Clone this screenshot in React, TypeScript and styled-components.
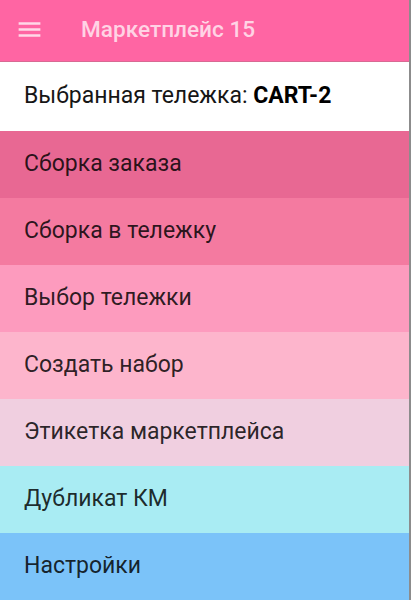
import React from "react";
import styled, { createGlobalStyle } from "styled-components";

const Global = createGlobalStyle`
  html, body { margin: 0; padding: 0; background: #ffffff; }
  body { font-family: Roboto, "Noto Sans", "Liberation Sans", sans-serif; }
`;

const Page = styled.div`
  width: 409px;
  height: 600px;
  overflow: hidden;
  border-right: 2px solid #8c8c8c;
  display: flex;
  flex-direction: column;
`;

const AppBar = styled.header`
  height: 62px;
  flex: 0 0 62px;
  box-sizing: border-box;
  background: #ff65a3;
  border-bottom: 1px solid #d86a93;
  display: flex;
  align-items: center;
  padding-left: 15px;
  padding-bottom: 2px;
  gap: 37px;
`;

const MenuButton = styled.div`
  width: 29px;
  height: 29px;
  display: flex;
  align-items: center;
  justify-content: center;
`;

const Title = styled.h1`
  margin: 0;
  font-size: 22.6px;
  font-weight: 500;
  color: rgba(255, 255, 255, 0.72);
`;

const Selected = styled.div`
  height: 69px;
  flex: 0 0 69px;
  box-sizing: border-box;
  background: #ffffff;
  display: flex;
  align-items: center;
  padding-left: 24px;
  padding-bottom: 2px;
  font-size: 23px;
  color: #161616;
`;

const Strong = styled.b`
  font-weight: 700;
  color: #000;
`;

const Item = styled.div<{ $bg: string }>`
  height: 67px;
  flex: 0 0 67px;
  box-sizing: border-box;
  background: ${(p) => p.$bg};
  display: flex;
  align-items: center;
  padding-left: 24px;
  padding-bottom: 3px;
  font-size: 23px;
  color: rgba(0, 0, 0, 0.84);
`;

const items: { label: string; bg: string }[] = [
  { label: "Сборка заказа", bg: "#e86893" },
  { label: "Сборка в тележку", bg: "#f47aa0" },
  { label: "Выбор тележки", bg: "#fd9bbe" },
  { label: "Создать набор", bg: "#fdb5cc" },
  { label: "Этикетка маркетплейса", bg: "#f0cfe0" },
  { label: "Дубликат КМ", bg: "#a9ecf3" },
  { label: "Настройки", bg: "#7bc3f9" },
];

export default function App() {
  return (
    <>
      <Global />
      <Page>
        <AppBar>
          <MenuButton>
            <svg width="29" height="29" viewBox="0 0 24 24">
              <path
                d="M3 18h18v-2H3v2zm0-5h18v-2H3v2zm0-7v2h18V6H3z"
                fill="rgba(255,255,255,0.75)"
              />
            </svg>
          </MenuButton>
          <Title>Маркетплейс 15</Title>
        </AppBar>
        <Selected>
          Выбранная тележка:&nbsp;<Strong>CART-2</Strong>
        </Selected>
        {items.map((it) => (
          <Item key={it.label} $bg={it.bg}>
            {it.label}
          </Item>
        ))}
      </Page>
    </>
  );
}
